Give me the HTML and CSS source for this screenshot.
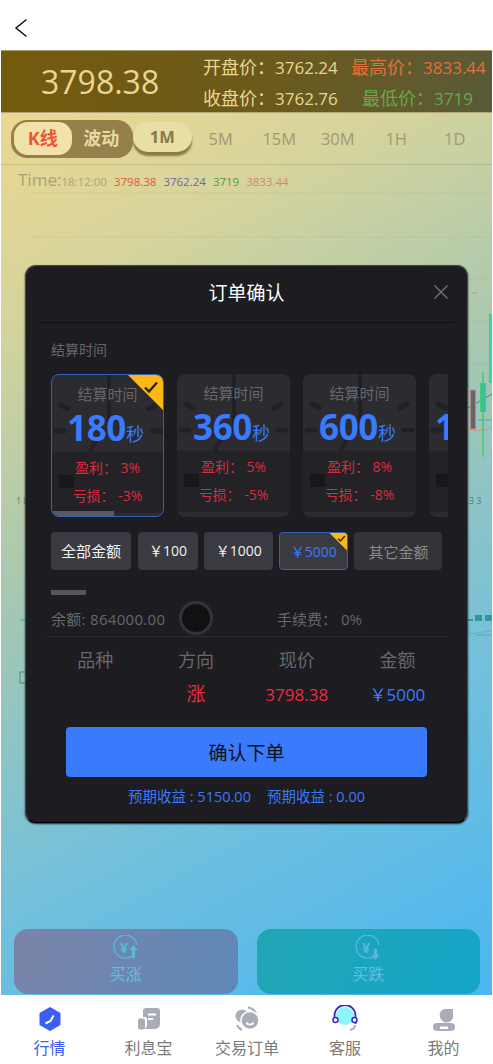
FILE: index.html
```html
<!DOCTYPE html>
<html lang="zh-CN">
<head>
    <meta charset="UTF-8">
    <meta name="viewport" content="width=device-width, initial-scale=1.0">
    <title>订单确认</title>
    <link rel="stylesheet" href="styles.css">
</head>
<body>
    <svg class="defs" width="0" height="0">
        <symbol id="clock" viewBox="0 0 113 143">
            <g fill="none" stroke="#212125" stroke-width="5" stroke-linecap="round">
                <path d="M9 30l7 4M104 30l-7 4M4 56h8M109 56h-8"/>
                <path d="M57 0v30M57 30v26" stroke-width="4"/>
                <path d="M38 76l6-11" stroke-width="4"/>
            </g>
            <rect x="7" y="100" width="15" height="13" fill="#18181b"/>
        </symbol>
        <symbol id="tick" viewBox="0 0 16 16">
            <path d="M2 8.500l4 4 8-9" fill="none" stroke="#2a2520" stroke-width="2.400"/>
        </symbol>
    </svg>

    <div class="page">
        <header class="topbar">
            <svg class="back" width="14" height="20" viewBox="0 0 14 20">
                <path d="M12.500 1.500L2 10l10.500 8.500" fill="none" stroke="#111" stroke-width="1.500"/>
            </svg>
        </header>

        <main class="market">
            <svg class="chart" viewBox="1 50 491 945" preserveAspectRatio="none">
                <g stroke="#8c9a80" stroke-opacity="0.14" stroke-width="1">
                    <path d="M29 193H492M29 237H492M29 279H492M29 322H492M29 364H492M29 408H492M29 450H492M29 492H492"/>
                </g>
                <path d="M472 293H480" stroke="#b09a90" stroke-width="1" stroke-dasharray="5 3"/>
                <path d="M468 408L492 394" stroke="#5a7a80" stroke-width="1" fill="none"/>
                <path d="M468 431L480 427L492 412" stroke="#a8cc66" stroke-width="1" fill="none"/>
                <path d="M468 429Q480 433 492 428" stroke="#c49aa0" stroke-width="1" fill="none"/>
                <path d="M478 420H492" stroke="#5a9ad8" stroke-width="1"/>
                <rect x="470.500" y="390" width="5" height="39" fill="#666" stroke="#b08a88"/>
                <path d="M483 372V457" stroke="#44cc66" stroke-width="1.500"/>
                <rect x="480.500" y="383.500" width="5" height="28" fill="#38c0a0" stroke="#44cc66"/>
                <rect x="489.500" y="314.500" width="4" height="68" fill="#38d8a0" stroke="#44cc66"/>
                <text class="axis-label" x="16" y="504">18</text>
                <text class="axis-label" x="469" y="504">33</text>
                <path d="M20 620H27" stroke="#3aa8b0" stroke-width="1"/>
                <path d="M467 620H473" stroke="#2a9a9a" stroke-width="2"/>
                <rect x="475" y="615" width="7" height="6" fill="#2a9a9a"/>
                <rect x="485" y="615" width="8" height="6" fill="#2a9a9a"/>
                <path d="M468 634L492 631" stroke="#30c8d8" stroke-width="1"/>
                <path d="M476 635H492" stroke="#a080c0" stroke-width="1"/>
                <path d="M26 672H20V683H26" stroke="#6a9a98" stroke-width="1.500" fill="none"/>
            </svg>

            <section class="quote">
                <div class="quote-price">3798.38</div>
                <div class="quote-stats">
                    <div class="stat-row">
                        <span class="stat">开盘价：<em>3762.24</em></span>
                        <span class="stat stat-high">最高价：<em>3833.44</em></span>
                    </div>
                    <div class="stat-row">
                        <span class="stat">收盘价：<em>3762.76</em></span>
                        <span class="stat stat-low">最低价：<em>3719</em></span>
                    </div>
                </div>
            </section>

            <nav class="periods">
                <div class="switch">
                    <span class="switch-item active">K线</span>
                    <span class="switch-item">波动</span>
                </div>
                <span class="period active">1M</span>
                <span class="period">5M</span>
                <span class="period">15M</span>
                <span class="period">30M</span>
                <span class="period">1H</span>
                <span class="period">1D</span>
            </nav>

            <div class="legend">
                <span class="legend-time">Time:</span><span class="legend-clock">18:12:00</span>
                <span class="legend-red">3798.38</span>
                <span class="legend-blue">3762.24</span>
                <span class="legend-green">3719</span>
                <span class="legend-pink">3833.44</span>
            </div>

            <div class="buy-bar">
                <button class="buy buy-up">
                    <svg width="26" height="26" viewBox="0 0 26 26">
                        <path d="M21 19.500A11.500 11.500 0 1 1 24 10" fill="none" stroke="#5ab8dc" stroke-width="1.300"/>
                        <text x="11" y="18" class="buy-yen">¥</text>
                        <path d="M20.500 10l-4 5h2.500v8h3v-8h2.500z" fill="#5ab8dc"/>
                    </svg>
                    <span>买涨</span>
                </button>
                <button class="buy buy-down">
                    <svg width="26" height="26" viewBox="0 0 26 26">
                        <path d="M21 19.500A11.500 11.500 0 1 1 24 10" fill="none" stroke="#5ab8dc" stroke-width="1.300"/>
                        <text x="11" y="18" class="buy-yen">¥</text>
                        <path d="M20.500 25l-4-5h2.500v-6h3v6h2.500z" fill="#5ab8dc"/>
                    </svg>
                    <span>买跌</span>
                </button>
            </div>

            <div class="modal">
                <div class="modal-head">
                    <h2>订单确认</h2>
                    <svg class="modal-close" width="16" height="16" viewBox="0 0 16 16">
                        <path d="M1.500 1.500l13 13M14.500 1.500l-13 13" stroke="#77777c" stroke-width="1.200"/>
                    </svg>
                </div>

                <div class="modal-label">结算时间</div>

                <div class="cards">
                    <div class="card selected">
                        <svg class="card-clock"><use href="#clock"/></svg>
                        <div class="card-title">结算时间</div>
                        <div class="card-time"><b>180</b>秒</div>
                        <div class="card-rate">盈利： 3%</div>
                        <div class="card-rate">亏损： -3%</div>
                        <div class="card-progress"></div>
                        <div class="corner"><svg width="16" height="16"><use href="#tick"/></svg></div>
                    </div>
                    <div class="card">
                        <svg class="card-clock"><use href="#clock"/></svg>
                        <div class="card-title">结算时间</div>
                        <div class="card-time"><b>360</b>秒</div>
                        <div class="card-rate">盈利： 5%</div>
                        <div class="card-rate">亏损： -5%</div>
                    </div>
                    <div class="card">
                        <svg class="card-clock"><use href="#clock"/></svg>
                        <div class="card-title">结算时间</div>
                        <div class="card-time"><b>600</b>秒</div>
                        <div class="card-rate">盈利： 8%</div>
                        <div class="card-rate">亏损： -8%</div>
                    </div>
                    <div class="card">
                        <svg class="card-clock"><use href="#clock"/></svg>
                        <div class="card-title">结算时间</div>
                        <div class="card-time"><b>1200</b>秒</div>
                        <div class="card-rate">盈利： 10%</div>
                        <div class="card-rate">亏损： -10%</div>
                    </div>
                </div>

                <div class="amounts">
                    <button class="amount all">全部金额</button>
                    <button class="amount">￥100</button>
                    <button class="amount">￥1000</button>
                    <button class="amount selected">￥5000<span class="corner-small"><svg width="9" height="9"><use href="#tick"/></svg></span></button>
                    <button class="amount other">其它金额</button>
                </div>

                <div class="mini-bar"></div>

                <div class="balance">
                    <span class="balance-text">余额: 864000.00</span>
                    <span class="balance-dot"></span>
                    <span class="balance-fee">手续费： 0%</span>
                </div>

                <div class="summary">
                    <span class="summary-head">品种</span>
                    <span class="summary-head">方向</span>
                    <span class="summary-head">现价</span>
                    <span class="summary-head">金额</span>
                    <span></span>
                    <span class="summary-val up">涨</span>
                    <span class="summary-val price">3798.38</span>
                    <span class="summary-val money">￥5000</span>
                </div>

                <button class="confirm">确认下单</button>

                <div class="expect">
                    <span>预期收益 : 5150.00</span>
                    <span>预期收益 : 0.00</span>
                </div>
            </div>
        </main>

        <footer class="tabbar">
            <a class="tab active">
                <svg width="26" height="26" viewBox="0 0 26 26">
                    <path d="M13 2l9.500 5.500v11L13 24l-9.500-5.500v-11z" fill="#3b5ef5" stroke="#3b5ef5" stroke-width="2" stroke-linejoin="round"/>
                    <path d="M8.500 17.500l5-2.500 3-5.500" fill="none" stroke="#fff" stroke-width="2"/>
                </svg>
                <span>行情</span>
            </a>
            <a class="tab">
                <svg width="26" height="26" viewBox="0 0 26 26">
                    <path d="M7 5a3 3 0 0 1 3-3h11a3 3 0 0 1 3 3v13a5 5 0 0 1-5 5H9a7 7 0 0 0 2-4v-6a2 2 0 0 0-2-2H7z" fill="#a9adb8"/>
                    <rect x="2" y="12.500" width="7" height="11" rx="2" fill="#a9adb8"/>
                    <path d="M12 8.500h8M12 13h5" stroke="#fff" stroke-width="2"/>
                </svg>
                <span>利息宝</span>
            </a>
            <a class="tab">
                <svg width="26" height="26" viewBox="0 0 26 26">
                    <circle cx="8" cy="10" r="6.500" fill="#a9adb8"/>
                    <path d="M14 1.500a10 10 0 0 1 8 6M3 19a10 10 0 0 0 5 5" fill="none" stroke="#a9adb8" stroke-width="2"/>
                    <circle cx="16" cy="14.500" r="9" fill="#a9adb8" stroke="#fff" stroke-width="1.500"/>
                    <path d="M12.500 16.500a4 4 0 0 0 7 0" fill="none" stroke="#fff" stroke-width="1.800"/>
                </svg>
                <span>交易订单</span>
            </a>
            <a class="tab">
                <svg width="26" height="28" viewBox="0 0 26 28">
                    <circle cx="13" cy="11" r="9" fill="#8ef5fa"/>
                    <path d="M2.500 14V10.500a10.500 10.500 0 0 1 21 0V19" fill="none" stroke="#3a2bc8" stroke-width="1.800"/>
                    <circle cx="3.500" cy="15" r="2.500" fill="#fff" stroke="#3a2bc8" stroke-width="1.500"/>
                    <circle cx="22.500" cy="15" r="2.500" fill="#fff" stroke="#3a2bc8" stroke-width="1.500"/>
                    <path d="M23 20q0 4-5 5" fill="none" stroke="#d0a0f0" stroke-width="2.200"/>
                </svg>
                <span>客服</span>
            </a>
            <a class="tab">
                <svg width="26" height="26" viewBox="0 0 26 26">
                    <path d="M13 3h9v6a6.500 6.500 0 0 1-13 2 7 7 0 0 1 4-8z" fill="#a9adb8"/>
                    <rect x="2" y="17" width="22" height="8" rx="4" fill="#a9adb8"/>
                    <rect x="9" y="20.500" width="8" height="2.500" fill="#fff"/>
                </svg>
                <span>我的</span>
            </a>
        </footer>
    </div>
</body>
</html>
```

FILE: styles.css
```css
:root {
    --blue: #3a7afc;
    --red: #ee2a40;
    --modal-bg: #1c1c21;
    --muted: #67676a;
    --cjk: "Open Sans", "Noto Sans CJK SC", sans-serif;
}

* {
    margin: 0;
    padding: 0;
    box-sizing: border-box;
}

html, body {
    width: 100%;
    height: 100%;
    overflow: hidden;
}

body {
    font-family: var(--cjk);
    background: #fff;
}

button {
    font-family: inherit;
    border: 0;
}

.defs {
    position: absolute;
}

.page {
    height: 100vh;
    display: flex;
    flex-direction: column;
}

.topbar {
    height: 50px;
    flex: none;
    padding: 18px 0 0 14px;
    background: #fff;
}

.back {
    display: block;
}

/* market area */
.market {
    flex: 1;
    position: relative;
    display: flex;
    flex-direction: column;
    margin: 0 1px;
    background: linear-gradient(152deg, #f2d88e 0%, #d6d49c 22%, #a8c8b0 45%, #72c0dc 72%, #4bb6f2 100%);
}

.chart {
    position: absolute;
    top: 0;
    left: 0;
    width: 100%;
    height: 100%;
}

.axis-label {
    font-size: 9px;
    letter-spacing: 2px;
    fill: #62766e;
}

.quote {
    position: relative;
    height: 63px;
    display: flex;
    align-items: center;
    border-top: 1px solid #a89c70;
    border-bottom: 1px solid #b0a678;
    background: linear-gradient(100deg, #755a0c 0%, #6a5a1c 55%, #5a5a38 100%);
    color: #ecd592;
}

.quote-price {
    width: 202px;
    padding-left: 40px;
    font-size: 32px;
    line-height: 1;
    flex: none;
}

.quote-stats {
    flex: 1;
    padding-top: 3px;
}

.stat-row {
    display: flex;
    white-space: nowrap;
    font-size: 18px;
    line-height: 31px;
}

.stat {
    width: 148px;
    flex: none;
}

.stat em {
    font-size: 17px;
    font-style: normal;
}

.stat-high {
    color: #e2703c;
}

.stat-low {
    margin-left: 11px;
    color: #68a84a;
}

.periods {
    position: relative;
    height: 52px;
    display: flex;
    align-items: center;
    padding-left: 10px;
    border-bottom: 1px solid rgba(140, 130, 90, 0.3);
}

.switch {
    width: 122px;
    height: 38px;
    flex: none;
    display: flex;
    align-items: center;
    padding: 0 3px;
    border-radius: 16px;
    background: #93804a;
}

.switch-item {
    width: 58px;
    height: 33px;
    line-height: 32px;
    text-align: center;
    font-size: 18px;
    font-weight: 700;
    color: #e8d9a2;
}

.switch-item.active {
    margin-right: 1px;
    border-radius: 14px;
    background: #f1e2aa;
    color: #ee5533;
}

.period {
    width: 58.500px;
    flex: none;
    text-align: center;
    font-size: 16.500px;
    color: #a09a72;
}

.period.active {
    height: 30px;
    margin-top: -3px;
    line-height: 29px;
    font-weight: 700;
    color: #857a4c;
    border-radius: 15px;
    background: #e9dea4;
    box-shadow: 0 4px 2px #8a7c42;
}

.legend {
    position: relative;
    display: flex;
    align-items: baseline;
    gap: 7px;
    height: 28px;
    padding: 3px 0 0 17px;
    font-size: 11.500px;
    line-height: 24px;
}

.legend-time {
    margin-right: -7px;
    font-size: 17px;
    color: #a8a27c;
}

.legend-clock {
    color: #a8a27c;
}

.legend-red {
    color: #d85c3c;
}

.legend-blue {
    color: #6a6aa8;
}

.legend-green {
    color: #5a9a3c;
}

.legend-pink {
    color: #d08878;
}

.buy-bar {
    position: relative;
    margin-top: auto;
    padding: 0 12px 1px 13px;
    display: flex;
    justify-content: space-between;
}

.buy {
    width: 223.500px;
    height: 65px;
    display: flex;
    flex-direction: column;
    align-items: center;
    padding-top: 6px;
    border-radius: 14px;
    font-size: 16px;
    line-height: 26px;
    color: #62bde0;
}

.buy svg {
    display: block;
}

.buy-up {
    background: linear-gradient(110deg, #7b84a8, #5e88b8);
}

.buy-down {
    background: linear-gradient(110deg, #22a6b4, #14a5c8);
}

.buy-yen {
    font-size: 15px;
    font-weight: 700;
    text-anchor: middle;
    fill: #5ab8dc;
}

/* order dialog */
.modal {
    position: absolute;
    top: 215px;
    left: 24px;
    width: 443px;
    height: 558px;
    padding: 0 25px;
    border-radius: 11px;
    background: var(--modal-bg);
    border: 1px solid #48484d;
    border-bottom-color: #000;
    box-shadow: 0 1px 2px rgba(0, 0, 0, 0.8);
}

.modal-head {
    position: relative;
    height: 57px;
    margin: 0 -12px;
    border-bottom: 1px solid #0e0e11;
    text-align: center;
}

.modal-head h2 {
    font-size: 19px;
    font-weight: 400;
    line-height: 55px;
    color: #fff;
}

.modal-close {
    position: absolute;
    top: 18px;
    right: 5px;
}

.modal-label {
    margin-top: 17px;
    font-size: 14px;
    line-height: 20px;
    color: var(--muted);
}

.cards {
    margin-top: 14px;
    width: 397px;
    display: flex;
    gap: 13px;
    overflow: hidden;
}

.card {
    position: relative;
    width: 113px;
    height: 143px;
    flex: none;
    overflow: hidden;
    text-align: center;
    border-radius: 8px;
    background: linear-gradient(#2b2b30 77px, #232327 77px, #232327 138px, #2b2b30 138px);
}

.card.selected {
    border: 1px solid #3560b8;
}

.card-clock {
    position: absolute;
    top: 0;
    left: 0;
    width: 113px;
    height: 143px;
}

.card-title, .card-time, .card-rate {
    position: relative;
}

.card-title {
    padding-top: 9px;
    font-size: 15px;
    line-height: 20px;
    color: var(--muted);
}

.card-time {
    height: 48px;
    padding-right: 4px;
    line-height: 48px;
    white-space: nowrap;
    font-size: 18px;
    color: var(--blue);
}

.card-time b {
    font-size: 35px;
    font-weight: 700;
    letter-spacing: -0.300px;
}

.card-rate {
    font-size: 14px;
    line-height: 28px;
    color: #dd2a3e;
}

.card-rate:nth-of-type(3) {
    margin-top: 2px;
}

.card-progress {
    position: absolute;
    left: -1px;
    bottom: -1px;
    width: 63px;
    height: 6px;
    background: #5a5a5e;
}

.corner {
    position: absolute;
    top: -1px;
    right: -1px;
    width: 37px;
    height: 37px;
    background: #fdb913;
    clip-path: polygon(0 0, 100% 0, 100% 100%);
}

.corner svg {
    position: absolute;
    top: 5px;
    right: 5px;
}

.amounts {
    margin-top: 15px;
    display: flex;
    gap: 6px;
}

.amount {
    position: relative;
    height: 38px;
    padding: 0 11.500px;
    overflow: hidden;
    border-radius: 4px;
    font-size: 14px;
    line-height: 36px;
    white-space: nowrap;
    color: #f2f2f2;
    background: #3a3a42;
}

.amount.all {
    margin-right: 1px;
    padding: 0 10px;
    font-size: 15px;
}

.amount.selected {
    border: 1px solid #3560b8;
    padding: 0 11px;
    color: var(--blue);
    line-height: 38px;
}

.amount.other {
    padding: 0 14px;
    background: #333338;
    font-size: 15px;
    line-height: 40px;
    color: #8a8a8c;
}

.corner-small {
    position: absolute;
    top: 0;
    right: 0;
    width: 18px;
    height: 18px;
    background: #fdb913;
    clip-path: polygon(0 0, 100% 0, 100% 100%);
}

.corner-small svg {
    position: absolute;
    top: 1px;
    right: 1px;
}

.mini-bar {
    width: 35px;
    height: 5px;
    margin-top: 20px;
    background: #56565b;
}

.balance {
    height: 37px;
    margin: 5px -5px 0 -5px;
    padding-left: 5px;
    display: flex;
    align-items: center;
    font-size: 15px;
    color: var(--muted);
    border-bottom: 1px solid #2b2b30;
}

.balance-text {
    width: 128px;
    letter-spacing: 0.300px;
    white-space: nowrap;
}

.balance-dot {
    width: 34px;
    height: 34px;
    flex: none;
    border-radius: 50%;
    background: #111114;
    border: 3px solid #333338;
}

.balance-fee {
    margin-left: 64px;
}

.summary {
    margin: 6px 0 0 -6px;
    width: 403px;
    display: grid;
    grid-template-columns: repeat(4, 100.700px);
    text-align: center;
}

.summary-head {
    font-size: 18px;
    line-height: 35px;
    color: var(--muted);
}

.summary-val {
    font-size: 17px;
    line-height: 33px;
}

.summary-val.up {
    font-size: 19px;
    color: var(--red);
}

.summary-val.price {
    color: var(--red);
}

.summary-val.money {
    color: var(--blue);
}

.confirm {
    display: block;
    width: 361px;
    height: 50px;
    margin: 16px 0 0 15px;
    border-radius: 4px;
    font-size: 19px;
    color: #111;
    background: var(--blue);
}

.expect {
    margin-top: 10px;
    display: flex;
    justify-content: center;
    gap: 16px;
    font-size: 14.500px;
    line-height: 20px;
    color: var(--blue);
}

/* bottom tabs */
.tabbar {
    height: 69px;
    flex: none;
    display: grid;
    grid-template-columns: 99px 99px 98px 98px 99px;
    background: #fff;
}

.tab {
    display: flex;
    flex-direction: column;
    align-items: center;
    padding-top: 10px;
    font-size: 16px;
    color: #7b7b7b;
}

.tab svg {
    display: block;
    height: 28px;
}

.tab span {
    margin-top: 4px;
    line-height: 22px;
}

.tab.active {
    color: #3d5ef0;
}
```
